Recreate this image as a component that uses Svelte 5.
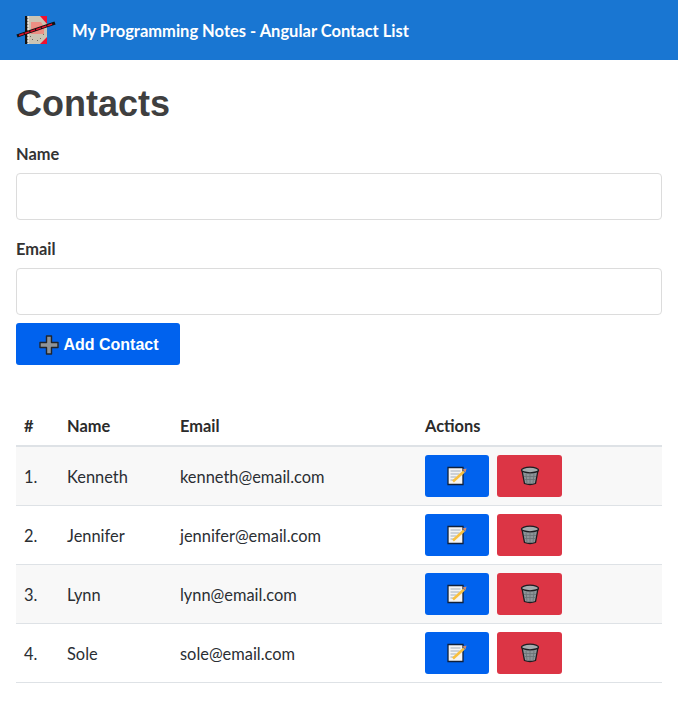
<script>
  const contacts = [
    { name: "Kenneth", email: "kenneth@email.com" },
    { name: "Jennifer", email: "jennifer@email.com" },
    { name: "Lynn", email: "lynn@email.com" },
    { name: "Sole", email: "sole@email.com" }
  ];
</script>

<header class="toolbar">
  <svg class="logo" width="40" height="30" viewBox="0 0 40 30">
    <rect x="9" y="1" width="22" height="28" fill="#cbc4b4" />
    <path d="M24 1h7v8zM31 22v7h-7z" fill="#f01030" />
    <path d="M15 7h10l3 5v7H15z" fill="#ec8f84" />
    <path d="M16 24h1v1h-1zM21 25h1v1h-1zM27 19h1v1h-1zM14 21h1v1h-1zM24 23h1v1h-1z" fill="#6f6a60" />
    <rect x="9" y="1" width="2.500" height="28" fill="#111" />
    <path d="M12 1v28" stroke="#fff" stroke-width="1" stroke-dasharray="2 1" />
    <path d="M1 21L39 8" stroke="#111" stroke-width="3.400" />
    <path d="M3 20.400L37 8.800" stroke="#e8102c" stroke-width="1.500" stroke-dasharray="5 1" />
  </svg>
  <span class="title">My Programming Notes - Angular Contact List</span>
</header>

<main>
  <h1>Contacts</h1>

  <div class="field">
    <label for="name">Name</label>
    <input id="name" type="text" />
  </div>
  <div class="field">
    <label for="email">Email</label>
    <input id="email" type="text" />
  </div>

  <button class="btn primary add">
    <svg width="20" height="20" viewBox="0 0 20 20">
      <path d="M7.500 1h5v6.500h6.500v5h-6.500v6.500h-5v-6.500h-6.500v-5h6.500z" fill="#8f9499" stroke="#20242c" stroke-width="1.400" stroke-linejoin="round" />
    </svg>
    Add Contact
  </button>

  <table>
    <thead>
      <tr>
        <th class="num">#</th>
        <th class="name">Name</th>
        <th class="mail">Email</th>
        <th>Actions</th>
      </tr>
    </thead>
    <tbody>
      {#each contacts as c, i}
        <tr>
          <td>{i + 1}.</td>
          <td>{c.name}</td>
          <td>{c.email}</td>
          <td>
            <div class="actions">
              <button class="btn primary icon" aria-label="Edit">
                <svg width="20" height="20" viewBox="0 0 20 20">
                  <path d="M1 1.500h15v17h-15z" fill="#f4f4f4" stroke="#10203a" stroke-width="1.300" />
                  <path d="M3.500 5h10M3.500 8h9M3.500 11h6M3.500 14h4" stroke="#a4aeba" stroke-width="1" />
                  <path d="M6 15.500L17 5.500" stroke="#f8c040" stroke-width="2.600" />
                  <path d="M15.500 3.500L19.500 2.500L18.500 6.500z" fill="#d08a70" />
                </svg>
              </button>
              <button class="btn danger icon" aria-label="Delete">
                <svg width="20" height="20" viewBox="0 0 20 20">
                  <path d="M2 4.500L4.500 17.500q5.500 2 11 0L18 4.500z" fill="#8c9498" stroke="#1c1c20" stroke-width="1.300" />
                  <ellipse cx="10" cy="4" rx="8.500" ry="2.800" fill="#a4abae" stroke="#1c1c20" stroke-width="1.300" />
                  <path d="M6 8l1 9M10 8v10M14 8l-1 9M4 10.500h12M4.500 13.500h11" stroke="#6a7175" stroke-width="0.800" />
                </svg>
              </button>
            </div>
          </td>
        </tr>
      {/each}
    </tbody>
  </table>
</main>

<style>
  :global(body) {
    font-family: Lato, "Open Sans", sans-serif;
    color: #2a2e33;
    background: #fff;
  }

  .toolbar {
    height: 60px;
    background: #1976d2;
    display: flex;
    align-items: center;
    padding: 0 16px;
    color: #fff;
  }
  .logo {
    margin-right: 16px;
  }
  .title {
    font-size: 16.5px;
    font-weight: 700;
    padding-top: 2px;
  }

  main {
    padding: 0 16px;
  }

  h1 {
    font-family: "Liberation Sans", Arial, sans-serif;
    font-size: 36px;
    font-weight: 700;
    line-height: 42px;
    color: #3f3f3f;
    margin: 23px 0 18px;
  }

  .field {
    margin-bottom: 18px;
  }
  .field:last-of-type {
    margin-bottom: 8px;
  }
  label {
    display: block;
    font-size: 16.4px;
    font-weight: 700;
    line-height: 22px;
    margin-bottom: 8px;
    color: #333;
  }
  input {
    display: block;
    box-sizing: border-box;
    width: 100%;
    height: 47px;
    border: 1px solid #dcdcdc;
    border-radius: 4px;
    outline: none;
  }

  .btn {
    border: none;
    border-radius: 3px;
    height: 42px;
    color: #fff;
    display: flex;
    align-items: center;
    justify-content: center;
    padding: 0;
  }
  .primary {
    background: #0062ee;
  }
  .danger {
    background: #dc3545;
  }
  .add {
    width: 164px;
    gap: 4px;
    padding: 2px 0 0 2px;
    font-family: "Liberation Sans", Arial, sans-serif;
    font-size: 16px;
    font-weight: 700;
  }
  .icon {
    width: 64px;
  }
  .danger.icon {
    width: 65px;
  }

  table {
    width: 100%;
    border-collapse: collapse;
    margin-top: 42px;
    font-size: 16.4px;
    table-layout: fixed;
  }
  th {
    text-align: left;
    font-weight: 700;
    height: 39px;
    padding: 0 9px 2px;
    border-bottom: 2px solid #dee2e6;
    color: #2b2b2b;
  }
  .num {
    width: 51px;
  }
  .name {
    width: 113px;
  }
  .mail {
    width: 245px;
  }
  td {
    height: 59px;
    padding: 0 9px;
    border-bottom: 1px solid #dee2e6;
  }
  td:not(:last-child) {
    padding-top: 2px;
  }
  th, td {
    box-sizing: border-box;
  }
  th:first-child, td:first-child {
    padding-left: 8px;
  }
  th:nth-child(n + 2), td:nth-child(n + 2) {
    padding-left: 0;
  }
  tbody tr:nth-child(odd) {
    background: #f8f8f8;
  }
  .actions {
    display: flex;
    gap: 8px;
  }
</style>
